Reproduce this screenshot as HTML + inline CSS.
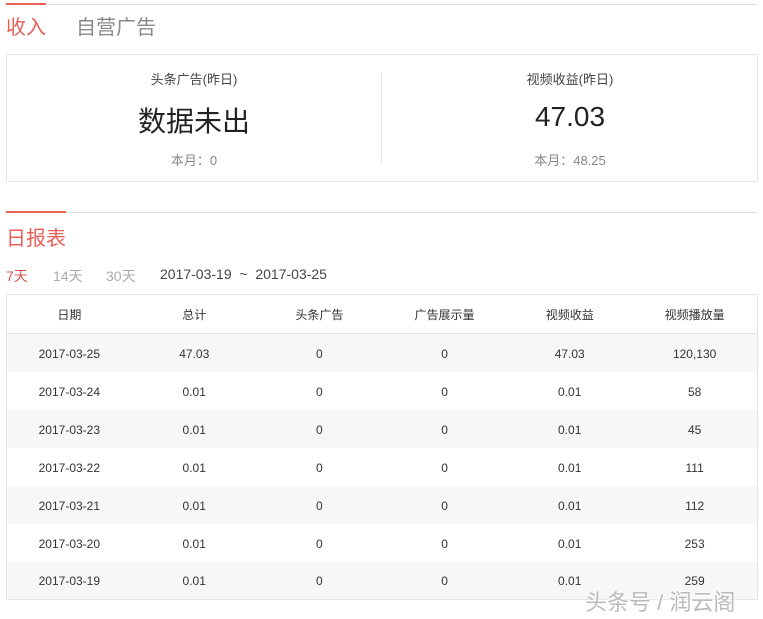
<!DOCTYPE html>
<html><head><meta charset="utf-8"><style>
*{margin:0;padding:0;box-sizing:border-box}
body{width:763px;height:619px;background:#fff;font-family:"Liberation Sans","Noto Sans CJK SC",sans-serif;color:#333;position:relative;overflow:hidden}
.abs{position:absolute}
.line{position:absolute;left:6px;right:6px;height:1px;background:#ddd}
.red{position:absolute;left:6px;height:2px;background:#e8605a}
table{position:absolute;left:6px;top:294px;width:752px;border-collapse:collapse;border:1px solid #e5e5e5;font-size:12px;color:#333}
td,th{text-align:center;font-weight:normal;width:125px}
th{height:39px;border-bottom:1px solid #e5e5e5}
td{height:38px;padding-top:2px}
tr.g td{background:#f7f7f7}
</style></head><body>
<div class="line" style="top:4px"></div><div class="red" style="top:3px;width:40px"></div>
<div class="abs" style="left:6px;top:11px;font-size:20px;color:#e8605a">收入</div>
<div class="abs" style="left:76px;top:11px;font-size:20px;color:#888">自营广告</div>
<div class="abs" style="left:6px;top:54px;width:752px;height:128px;border:1px solid #e5e5e5"></div>
<div class="abs" style="left:381px;top:72px;width:1px;height:92px;background:#e5e5e5"></div>
<div class="abs" style="left:6px;width:376px;top:69px;text-align:center;font-size:13px;color:#444">头条广告(昨日)</div>
<div class="abs" style="left:6px;width:376px;top:100px;text-align:center;font-size:28px;color:#222">数据未出</div>
<div class="abs" style="left:6px;width:376px;top:150px;text-align:center;font-size:13px;color:#888">本月：0</div>
<div class="abs" style="left:382px;width:376px;top:69px;text-align:center;font-size:13px;color:#444">视频收益(昨日)</div>
<div class="abs" style="left:382px;width:376px;top:101px;text-align:center;font-size:28px;color:#222">47.03</div>
<div class="abs" style="left:382px;width:376px;top:150px;text-align:center;font-size:13px;color:#888">本月：48.25</div>
<div class="line" style="top:212px"></div><div class="red" style="top:211px;width:60px"></div>
<div class="abs" style="left:6px;top:222px;font-size:20px;color:#e8605a">日报表</div>
<div class="abs" style="left:6px;top:266px;font-size:14px;color:#d9534f">7天</div>
<div class="abs" style="left:53px;top:266px;font-size:14px;color:#aaa">14天</div>
<div class="abs" style="left:106px;top:266px;font-size:14px;color:#aaa">30天</div>
<div class="abs" style="left:160px;top:266px;font-size:14px;color:#444">2017-03-19 &nbsp;~ &nbsp;2017-03-25</div>
<table>
<tr><th>日期</th><th>总计</th><th>头条广告</th><th>广告展示量</th><th>视频收益</th><th>视频播放量</th></tr>
<tr class="g"><td>2017-03-25</td><td>47.03</td><td>0</td><td>0</td><td>47.03</td><td>120,130</td></tr>
<tr><td>2017-03-24</td><td>0.01</td><td>0</td><td>0</td><td>0.01</td><td>58</td></tr>
<tr class="g"><td>2017-03-23</td><td>0.01</td><td>0</td><td>0</td><td>0.01</td><td>45</td></tr>
<tr><td>2017-03-22</td><td>0.01</td><td>0</td><td>0</td><td>0.01</td><td>111</td></tr>
<tr class="g"><td>2017-03-21</td><td>0.01</td><td>0</td><td>0</td><td>0.01</td><td>112</td></tr>
<tr><td>2017-03-20</td><td>0.01</td><td>0</td><td>0</td><td>0.01</td><td>253</td></tr>
<tr class="g"><td>2017-03-19</td><td>0.01</td><td>0</td><td>0</td><td>0.01</td><td>259</td></tr>
</table>
<div class="abs" style="left:585px;top:585px;font-size:22px;color:#bbb;text-shadow:0 0 2px #fff,0 0 2px #fff">头条号 / 润云阁</div>
</body></html>
